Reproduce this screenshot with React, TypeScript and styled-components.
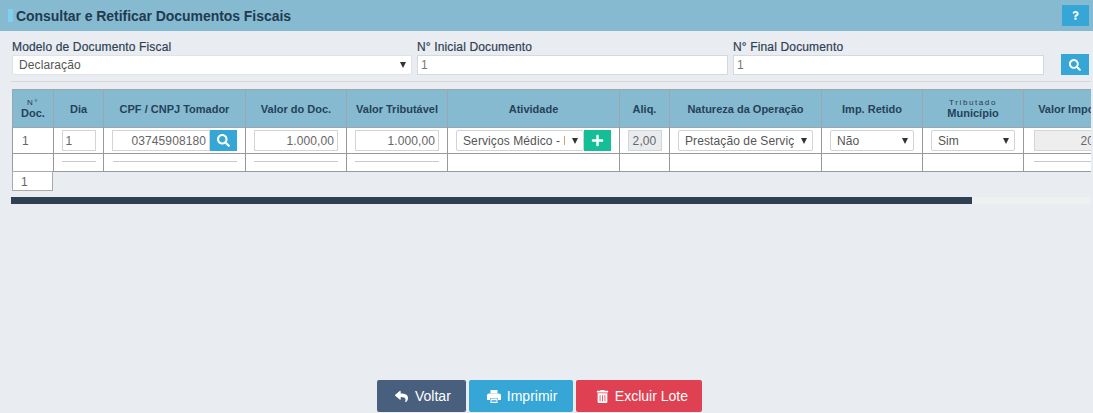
import React from 'react'
import styled, { createGlobalStyle } from 'styled-components'
import { FaSearch, FaPlus, FaReply, FaTrashAlt, FaQuestion } from 'react-icons/fa'

const GlobalStyle = createGlobalStyle`
  html, body {
    margin: 0;
    padding: 0;
    background: #e9edf2;
    font-family: "Liberation Sans", Arial, sans-serif;
    overflow: hidden;
  }
  * {
    box-sizing: border-box;
  }
`

const columns = [41, 50, 142, 101, 101, 172, 50, 152, 101, 101, 102]

const PrintIcon = () => (
  <svg width="14" height="13" viewBox="0 0 14 13">
    <path fill="#fff" d="M3.5 0h7v3.5h-7z" />
    <path fill="#fff" d="M2 3.5h10a2 2 0 0 1 2 2V10h-3V8H3v2H0V5.500a2 2 0 0 1 2-2z" />
    <path fill="#fff" d="M3.500 8.500h7V13h-7z" />
    <path fill="#35a6d6" d="M4.500 10h5v.8h-5zM4.500 11.300h5v.7h-5z" />
  </svg>
)

const App = () => {
  return (
    <Page>
      <GlobalStyle />
      <Header>
        <TitleMark />
        <Title>Consultar e Retificar Documentos Fiscais</Title>
        <HelpButton><FaQuestion /></HelpButton>
      </Header>

      <FilterRow>
        <Field>
          <FieldLabel>Modelo de Documento Fiscal</FieldLabel>
          <SelectWrap>
            <Select defaultValue="Declaração">
              <option>Declaração</option>
            </Select>
          </SelectWrap>
        </Field>
        <Field>
          <FieldLabel>N° Inicial Documento</FieldLabel>
          <TextInput defaultValue="1" />
        </Field>
        <Field>
          <FieldLabel>N° Final Documento</FieldLabel>
          <TextInput defaultValue="1" />
        </Field>
        <SearchButton><FaSearch /></SearchButton>
      </FilterRow>
      <Divider />

      <TableWrap>
        <Table>
          <colgroup>
            {columns.map((w, i) => <col key={i} width={w} />)}
          </colgroup>
          <thead>
            <tr>
              <Th><Tiny>N°</Tiny>Doc.</Th>
              <Th>Dia</Th>
              <Th>CPF / CNPJ Tomador</Th>
              <Th>Valor do Doc.</Th>
              <Th>Valor Tributável</Th>
              <Th>Atividade</Th>
              <Th>Aliq.</Th>
              <Th>Natureza da Operação</Th>
              <Th>Imp. Retido</Th>
              <Th><Tiny>Tributado</Tiny>Município</Th>
              <Th>Valor Imposto</Th>
            </tr>
          </thead>
          <tbody>
            <tr>
              <IndexTd>1</IndexTd>
              <Td><CellInput $width={34} defaultValue="1" /></Td>
              <Td>
                <Group>
                  <CellInput $align="right" $width={98} defaultValue="03745908180" />
                  <AddonButton $color="#35a6d6"><FaSearch /></AddonButton>
                </Group>
              </Td>
              <Td><CellInput $align="right" $width={84} defaultValue="1.000,00" /></Td>
              <Td><CellInput $align="right" $width={84} defaultValue="1.000,00" /></Td>
              <Td>
                <Group>
                  <SelectWrap $width={128}>
                    <CellSelect defaultValue="Serviços Médico - Hospitalar">
                      <option>Serviços Médico - Hospitalar</option>
                    </CellSelect>
                  </SelectWrap>
                  <AddonButton $color="#14bf98"><FaPlus /></AddonButton>
                </Group>
              </Td>
              <Td><CellInput $align="center" $width={34} $fill="#e9ecef" readOnly defaultValue="2,00" /></Td>
              <Td>
                <SelectWrap $width={135}>
                  <CellSelect defaultValue="Prestação de Serviço">
                    <option>Prestação de Serviço</option>
                  </CellSelect>
                </SelectWrap>
              </Td>
              <Td>
                <SelectWrap $width={84}>
                  <CellSelect defaultValue="Não"><option>Não</option></CellSelect>
                </SelectWrap>
              </Td>
              <Td>
                <SelectWrap $width={84}>
                  <CellSelect defaultValue="Sim"><option>Sim</option></CellSelect>
                </SelectWrap>
              </Td>
              <Td><CellInput $align="right" $width={81} $fill="#eeeeee" readOnly defaultValue="20,00" /></Td>
            </tr>
            <tr>
              <TotalTd />
              <TotalTd><TotalLine $width={34} /></TotalTd>
              <TotalTd><TotalLine $width={124} /></TotalTd>
              <TotalTd><TotalLine $width={84} /></TotalTd>
              <TotalTd><TotalLine $width={84} /></TotalTd>
              <TotalTd />
              <TotalTd />
              <TotalTd />
              <TotalTd />
              <TotalTd />
              <TotalTd><TotalLine $width={81} /></TotalTd>
            </tr>
          </tbody>
        </Table>
      </TableWrap>
      <CountCell>1</CountCell>
      <Scrollbar>
        <ScrollThumb />
      </Scrollbar>

      <Footer>
        <ActionButton $color="#48607e"><FaReply />Voltar</ActionButton>
        <ActionButton $color="#35a6d6" $width={104} $gap={6}><PrintIcon />Imprimir</ActionButton>
        <ActionButton $color="#df4152" $width={126} $left={20} $gap={6}><FaTrashAlt />Excluir Lote</ActionButton>
      </Footer>
    </Page>
  )
}

const Page = styled.div`
  height: 413px;
  display: flex;
  flex-direction: column;
`

const Header = styled.div`
  height: 31px;
  flex: none;
  display: flex;
  align-items: center;
  padding: 0 4px 0 8px;
  background: #86bad0;
`

const TitleMark = styled.span`
  width: 5px;
  height: 13px;
  margin-right: 3px;
  background: #7fd0ee;
`

const Title = styled.h1`
  margin: 0;
  flex: 1;
  font-size: 14px;
  font-weight: 700;
  letter-spacing: -0.05px;
  color: #1f3b52;
`

const HelpButton = styled.button`
  width: 27px;
  height: 21px;
  padding: 0;
  border: none;
  background: #35a6d6;
  color: #fff;
  font-size: 9px;
  display: flex;
  align-items: center;
  justify-content: center;
`

const FilterRow = styled.div`
  display: grid;
  grid-template-columns: 400px 311px 311px 28px;
  column-gap: 5px;
  align-items: end;
  padding: 9px 4px 0 12px;
`

const Field = styled.div`
  display: flex;
  flex-direction: column;
`

const FieldLabel = styled.label`
  height: 15px;
  font-size: 12px;
  font-weight: 400;
  line-height: 14px;
  letter-spacing: 0.15px;
  color: #2e3f52;
  -webkit-text-stroke: 0.2px #2e3f52;
`

const SelectWrap = styled.div<{ $width?: number }>`
  position: relative;
  width: ${p => (p.$width ? `${p.$width}px` : '100%')};

  &::after {
    content: '';
    position: absolute;
    top: 50%;
    right: 6px;
    margin-top: -3px;
    border-left: 3px solid transparent;
    border-right: 3px solid transparent;
    border-top: 6px solid #333;
    pointer-events: none;
  }
`

const Select = styled.select`
  display: block;
  width: 100%;
  height: 20px;
  padding: 0 18px 0 6px;
  appearance: none;
  border: 1px solid #dfe3e7;
  border-radius: 2px;
  background: #fff;
  font-family: inherit;
  font-size: 12px;
  letter-spacing: 0.1px;
  color: #555;
`

const CellSelect = styled(Select)`
  height: 21px;
  border-color: #cfd4d9;
`

const TextInput = styled.input`
  width: 100%;
  height: 20px;
  padding: 0 3px;
  border: 1px solid #d5d9dd;
  background: #fff;
  font-family: inherit;
  font-size: 12px;
  color: #777;
`

const SearchButton = styled.button`
  width: 28px;
  height: 21px;
  margin-left: 12px;
  padding: 0;
  border: none;
  background: #35a6d6;
  color: #fff;
  font-size: 12px;
  display: flex;
  align-items: center;
  justify-content: center;
`

const Divider = styled.div`
  height: 1px;
  margin: 6px 2px 0 11px;
  background: #d3d6da;
`

const TableWrap = styled.div`
  margin: 7px 2px 0 12px;
  overflow: hidden;
`

const Table = styled.table`
  width: 1013px;
  table-layout: fixed;
  border-collapse: collapse;
  background: #fff;
`

const Th = styled.th`
  height: 38px;
  padding: 0 2px;
  background: #86bad0;
  border: 1px solid #9aa8ae;
  font-size: 11px;
  font-weight: 700;
  line-height: 12px;
  color: #24425a;
  text-align: center;
`

const Tiny = styled.span`
  display: block;
  font-size: 8px;
  line-height: 9px;
  font-weight: 400;
  letter-spacing: 1.6px;
  color: #1f3b52;
`

const Td = styled.td`
  height: 26px;
  padding: 0;
  border: 1px solid #999;
  font-size: 12px;
  color: #666;
  text-align: center;
  vertical-align: middle;
  white-space: nowrap;

  & > * {
    margin: 0 auto;
  }
`

const IndexTd = styled(Td)`
  padding-left: 9px;
  text-align: left;
`

const TotalTd = styled(Td)`
  height: 18px;
  padding-bottom: 2px;
`

const TotalLine = styled.div<{ $width: number }>`
  width: ${p => p.$width}px;
  height: 1px;
  background: #c9c9c9;
`

const Group = styled.div`
  display: flex;
  justify-content: center;
`

const CellInput = styled.input<{ $align?: string; $width: number; $fill?: string }>`
  display: block;
  width: ${p => p.$width}px;
  height: 21px;
  padding: 0 3px;
  border: 1px solid #d2d6da;
  background: ${p => p.$fill ?? '#fff'};
  font-family: inherit;
  font-size: 12px;
  letter-spacing: 0.1px;
  color: #666;
  text-align: ${p => p.$align ?? 'left'};
`

const AddonButton = styled.button<{ $color: string }>`
  width: 27px;
  height: 21px;
  flex: none;
  padding: 0;
  border: none;
  background: ${p => p.$color};
  color: #fff;
  font-size: 13px;
  display: flex;
  align-items: center;
  justify-content: center;
`

const CountCell = styled.div`
  width: 41px;
  height: 20px;
  margin-left: 12px;
  margin-top: -1px;
  border: 1px solid #aaa;
  background: #fff;
  font-size: 12px;
  line-height: 20px;
  color: #666;
  padding-left: 8px;
`

const Scrollbar = styled.div`
  height: 7px;
  margin: 6px 2px 0 11px;
  background: #eef0f2;
`

const ScrollThumb = styled.div`
  width: 961px;
  height: 100%;
  background: #2f4054;
`

const Footer = styled.div`
  margin-top: auto;
  padding: 0 0 1px 377px;
  display: flex;
  gap: 3px;
`

const ActionButton = styled.button<{ $color: string; $width?: number; $left?: number; $gap?: number }>`
  height: 32px;
  ${p => (p.$width ? `width: ${p.$width}px;` : '')}
  padding: 0 0 0 ${p => p.$left ?? 18}px;
  padding-right: ${p => (p.$width ? 0 : 15)}px;
  border: none;
  border-radius: 2px;
  background: ${p => p.$color};
  color: #fff;
  font-family: inherit;
  font-size: 14px;
  display: flex;
  align-items: center;
  gap: ${p => p.$gap ?? 7}px;

  svg {
    font-size: 13px;
  }
`

export default App
